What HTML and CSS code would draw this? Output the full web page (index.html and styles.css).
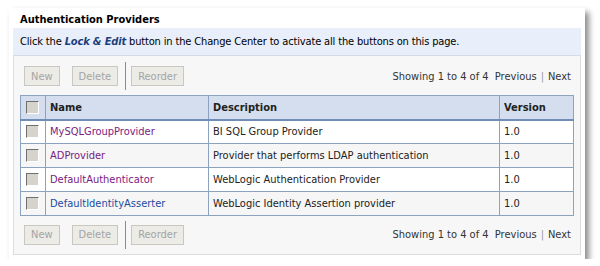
FILE: index.html
```html
<!DOCTYPE html>
<html lang="en">
<head>
  <meta charset="UTF-8">
  <title>Authentication Providers</title>
  <link rel="stylesheet" href="styles.css">
</head>
<body>
<div class="panel">
  <h2 class="title">Authentication Providers</h2>
  <div class="info">
    Click the <em>Lock &amp; Edit</em> button in the Change Center to activate all the buttons on this page.
  </div>
  <div class="content">
    <div class="toolbar">
      <div class="buttons">
        <button disabled>New</button>
        <button disabled>Delete</button>
        <span class="sep"></span>
        <button disabled>Reorder</button>
      </div>
      <div class="pager">Showing 1 to 4 of 4 &nbsp;<span class="nav">Previous</span><span class="bar">|</span><span class="nav">Next</span></div>
    </div>
    <table>
      <thead>
        <tr>
          <th class="check"><span class="box"></span></th>
          <th class="name">Name</th>
          <th class="desc">Description</th>
          <th class="ver">Version</th>
        </tr>
      </thead>
      <tbody>
        <tr>
          <td class="check"><span class="box"></span></td>
          <td><a class="visited" href="#">MySQLGroupProvider</a></td>
          <td>BI SQL Group Provider</td>
          <td>1.0</td>
        </tr>
        <tr class="alt">
          <td class="check"><span class="box"></span></td>
          <td><a class="visited" href="#">ADProvider</a></td>
          <td>Provider that performs LDAP authentication</td>
          <td>1.0</td>
        </tr>
        <tr>
          <td class="check"><span class="box"></span></td>
          <td><a class="visited" href="#">DefaultAuthenticator</a></td>
          <td>WebLogic Authentication Provider</td>
          <td>1.0</td>
        </tr>
        <tr class="alt">
          <td class="check"><span class="box"></span></td>
          <td><a href="#">DefaultIdentityAsserter</a></td>
          <td>WebLogic Identity Assertion provider</td>
          <td>1.0</td>
        </tr>
      </tbody>
    </table>
    <div class="toolbar bottom">
      <div class="buttons">
        <button disabled>New</button>
        <button disabled>Delete</button>
        <span class="sep"></span>
        <button disabled>Reorder</button>
      </div>
      <div class="pager">Showing 1 to 4 of 4 &nbsp;<span class="nav">Previous</span><span class="bar">|</span><span class="nav">Next</span></div>
    </div>
  </div>
</div>
</body>
</html>
```
FILE: styles.css
```css
body {
    margin: 0;
    background: #fff;
    font-family: "DejaVu Sans Condensed", "DejaVu Sans", sans-serif;
    font-stretch: condensed;
    font-size: 11px;
    color: #000;
}

.panel {
    width: 576px;
    margin: 8px 0 0 9px;
    padding: 0 4px 4px 4px;
    box-sizing: border-box;
    background: #fff;
    box-shadow: 4px 4px 6px rgba(0, 0, 0, 0.45);
}

.title {
    margin: 0;
    padding: 5px 0 0 7px;
    height: 20px;
    box-sizing: border-box;
    font-size: 11px;
    font-weight: bold;
}

.info {
    background: #e8eefa;
    padding: 7px 7px 0 7px;
    height: 28px;
    box-sizing: border-box;
    border-bottom: 1px solid #d5dbe5;
    letter-spacing: -0.15px;
}

.info em {
    font-weight: bold;
    color: #1c3f7c;
}

.content {
    background: #f7f7f7;
    border: 1px solid #dcdcdc;
    border-top: none;
    padding: 0 6px 3px 6px;
}

.toolbar {
    display: flex;
    justify-content: space-between;
    align-items: center;
    height: 38px;
    padding-top: 1px;
}

.toolbar.bottom {
    height: 33px;
    padding-top: 2px;
}

.buttons {
    display: flex;
    align-items: center;
    gap: 12px;
    padding-left: 4px;
}

button {
    font-family: inherit;
    font-size: 11px;
    color: #a4a4a4;
    background: #ecebe6;
    border: 1px solid #c8c8c0;
    height: 20px;
    padding: 0 6px;
}

.sep {
    width: 1px;
    height: 28px;
    background: #8a8a8a;
    margin: 0 -7px 0 -5px;
}

.pager {
    color: #333;
    padding-right: 3px;
}

.pager .bar {
    color: #999;
    margin: 0 4px;
}

table {
    width: 100%;
    border-collapse: collapse;
    border: 1px solid #5b7ca6;
}

th, td {
    border: 1px solid #8ba2c0;
    height: 24px;
    box-sizing: border-box;
    padding: 0 4px;
    text-align: left;
    color: #222;
}

thead th {
    background: #d4deee;
    font-weight: bold;
    border-bottom: 2px solid #6f8db5;
}

tbody tr {
    background: #fff;
}

tbody tr.alt {
    background: #f6f6f6;
}

.check {
    width: 25px;
    padding: 0 0 0 5px;
}

.name {
    width: 163px;
}

.ver {
    width: 74px;
}

.box {
    display: block;
    width: 11px;
    height: 11px;
    background: #d6d3cc;
    border-top: 1px solid #6f6f6f;
    border-left: 1px solid #6f6f6f;
    border-right: 1px solid #fff;
    border-bottom: 1px solid #fff;
}

a {
    color: #1b4ba0;
    text-decoration: none;
}

a.visited {
    color: #7a1a82;
}
```
